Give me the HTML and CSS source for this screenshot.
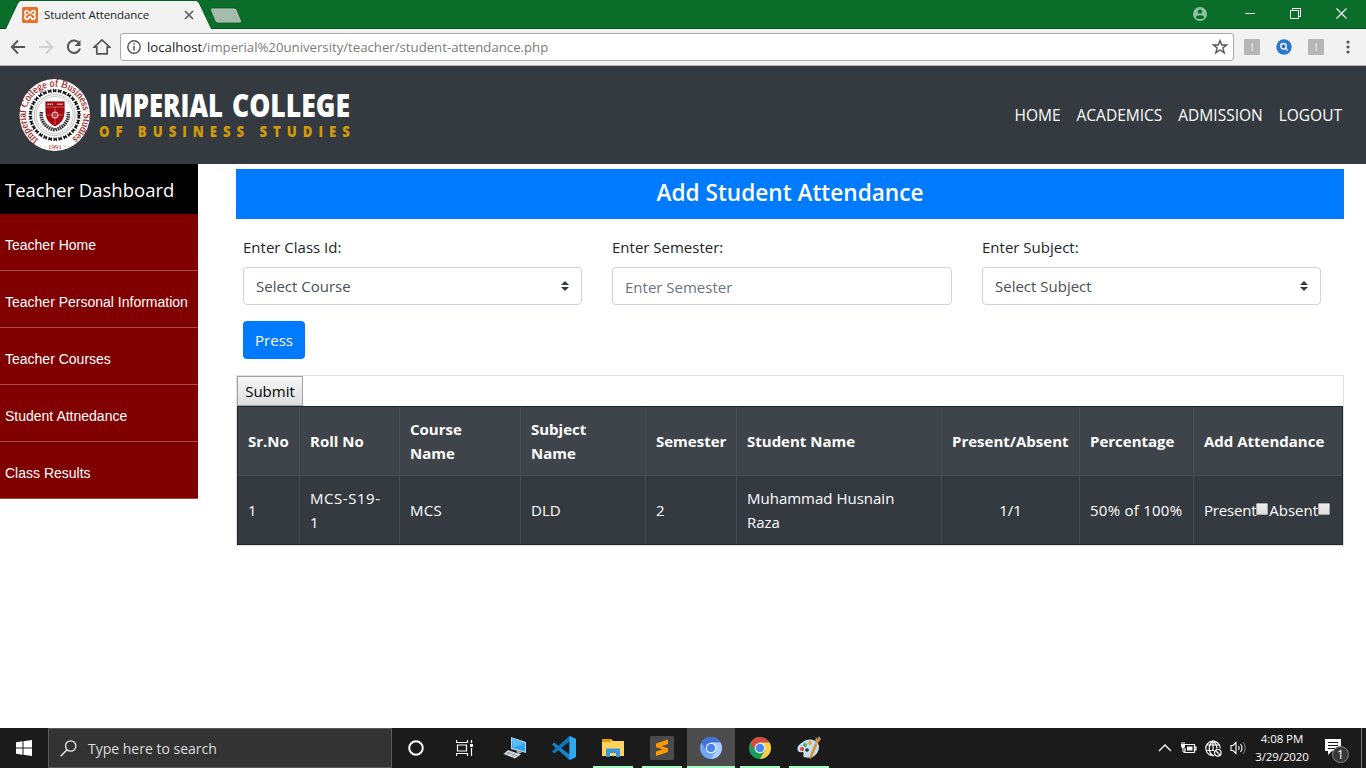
FILE: index.html
```html
<!DOCTYPE html>
<html lang="en">
<head>
<meta charset="utf-8">
<title>Student Attendance</title>
<link rel="stylesheet" href="styles.css">
</head>
<body>
<div class="screen">
  <div class="tabstrip">
    <svg class="tabshape" width="250" height="29" viewBox="0 0 250 29">
      <path d="M0 28.5H6L18 3Q19 1 21 1H196Q198 1 199 3L210.500 28.500H250" fill="none" stroke="#07501f"/>
      <path d="M6 29L18 3.500Q19 1 21 1H196Q198 1 199 3.500L211 29Z" fill="#f2f2f2"/>
      <path d="M212 8H234Q236 8 237 10L241.500 21Q242 23 240 23H218Q216 23 215 21L210.500 10Q210 8 212 8Z" fill="#a5bcad" stroke="#07501f" stroke-width=".7"/>
    </svg>
    <div class="tab">
      <svg width="16" height="16" viewBox="0 0 16 16"><rect width="16" height="16" rx="1.500" fill="#e87127"/><path d="M4.700 3.500C2.500 3.500 2.400 6.900 4.500 7.500C2.300 8.300 2.500 12.400 4.900 12.400C7 12.400 6.500 9.700 8 9.700S9 12.400 11.100 12.400C13.500 12.400 13.700 8.300 11.500 7.500C13.600 6.900 13.500 3.500 11.300 3.500C9.400 3.500 9.500 6 8 6S6.600 3.500 4.700 3.500Z" fill="none" stroke="#fff" stroke-width="1.700"/></svg>
      <span class="tabtitle">Student Attendance</span>
      <svg width="10" height="10" viewBox="0 0 10 10"><path d="M1 1L9 9M9 1L1 9" stroke="#5a5a5a" stroke-width="1.600"/></svg>
    </div>
    <div class="winbuttons">
      <svg width="14" height="14" viewBox="0 0 14 14"><circle cx="7" cy="7" r="7" fill="#8fc0a0"/><circle cx="7" cy="4.600" r="2.200" fill="#0a6e2a"/><path d="M2.600 10.400C3.500 7.400 10.500 7.400 11.400 10.400C9.500 12.500 4.500 12.500 2.600 10.400Z" fill="#0a6e2a"/></svg>
      <svg width="11" height="11" viewBox="0 0 11 11"><path d="M1 5.500H11" stroke="#fff"/></svg>
      <svg width="11" height="11" viewBox="0 0 11 11"><path d="M.5 2.500H8.500V10.500H.5ZM2.500 2.500V.5H10.500V8.500H8.500" fill="none" stroke="#fff"/></svg>
      <svg width="11" height="11" viewBox="0 0 11 11"><path d="M.5 .5L10.500 10.500M10.500 .5L.5 10.500" stroke="#fff" stroke-width="1.200"/></svg>
    </div>
  </div>
  <div class="toolbar">
    <div class="navicons">
      <svg width="16" height="16" viewBox="0 0 16 16"><path d="M8 1.500L1.800 8L8 14.500M2 8H15" fill="none" stroke="#555" stroke-width="1.900"/></svg>
      <svg width="16" height="16" viewBox="0 0 16 16"><path d="M8 1.500L14.200 8L8 14.500M14 8H1" fill="none" stroke="#d2d2d2" stroke-width="1.900"/></svg>
      <svg width="16" height="16" viewBox="0 0 16 16"><path d="M13 4A6.200 6.200 0 1 0 14 9.500" fill="none" stroke="#555" stroke-width="2"/><path d="M14.500 1V7H8.500Z" fill="#555"/></svg>
      <svg width="18" height="18" viewBox="0 0 18 18"><path d="M1.200 9.200L9 2L16.800 9.200H14.200V15.800H3.800V9.200Z" fill="none" stroke="#555" stroke-width="1.700"/></svg>
    </div>
    <div class="urlbar">
      <svg width="14" height="14" viewBox="0 0 14 14"><circle cx="7" cy="7" r="6.200" fill="none" stroke="#555" stroke-width="1.400"/><path d="M7 6V10.500M7 3.300V4.800" stroke="#555" stroke-width="1.600"/></svg>
      <span class="url"><b>localhost</b>/imperial%20university/teacher/student-attendance.php</span>
      <svg width="16" height="16" viewBox="0 0 16 16"><path d="M8 1.500L9.800 6H14.600L10.800 9L12.200 13.800L8 11L3.800 13.800L5.200 9L1.400 6H6.200Z" fill="none" stroke="#555" stroke-width="1.400"/></svg>
    </div>
    <div class="extensions">
      <span class="ext">I</span>
      <svg width="16" height="16" viewBox="0 0 16 16"><circle cx="8" cy="8" r="7.700" fill="#2977ce"/><circle cx="7.500" cy="7.300" r="2.800" fill="none" stroke="#fff" stroke-width="1.300"/><path d="M9.500 9.300L11.500 11.500" stroke="#fff" stroke-width="1.300"/></svg>
      <span class="ext">I</span>
      <svg width="4" height="14" viewBox="0 0 4 14"><path d="M2 2h0M2 7h0M2 12h0" stroke="#555" stroke-width="3.200" stroke-linecap="round"/></svg>
    </div>
  </div>

  <header class="site-header">
    <svg class="brand" width="340" height="76" viewBox="0 0 340 76">
      <ellipse cx="36.700" cy="38" rx="35.200" ry="36" fill="#fff"/>
      <path d="M20.500 62.500A29 29 0 1 1 53.500 62" id="outerName" fill="none"/>
      <text class="seal-name"><textPath href="#outerName" textLength="146" lengthAdjust="spacingAndGlyphs">Imperial College of Business Studies</textPath></text>
      <text class="seal-year" x="37" y="71.500" text-anchor="middle">· · 1991 · ·</text>
      <circle cx="36.700" cy="38" r="24.300" fill="none" stroke="#151515" stroke-width="3.500" stroke-dasharray="3.600 1.490"/>
      <circle cx="36.700" cy="38" r="26" fill="none" stroke="#fff" stroke-width="1.400" stroke-dasharray="1.400 4.045" stroke-dashoffset="-1.200"/>
      <circle cx="36.700" cy="38" r="22.600" fill="none" stroke="#fff" stroke-width="1.400" stroke-dasharray="1.300 3.433" stroke-dashoffset="-1"/>
      <circle cx="36.700" cy="38" r="20.500" fill="none" stroke="#999" stroke-width=".7"/>
      <circle cx="36.700" cy="38" r="18.500" fill="none" stroke="#aaa" stroke-width=".7"/>
      <path d="M23.500 35C22 44 28 51 36.700 53C45.500 51 51.500 44 50 35" fill="none" stroke="#333" stroke-width="3.600" stroke-dasharray="1.600 .7"/>
      <path d="M27 24H47V35Q47 45 37 50Q27 45 27 35Z" fill="#a5080f" stroke="#fff" stroke-width=".8"/>
      <path d="M28 30H46M37 30V48M29 38H45" stroke="#d98083" stroke-width=".7"/>
      <path d="M29.500 27.300H35M39 27.300H44.500" stroke="#f0c5c6" stroke-width="1.600" stroke-dasharray="1.500 .6"/>
      <circle cx="37" cy="38" r="2.900" fill="none" stroke="#edb7b9" stroke-width="1.200"/>
      <text class="brand-main" x="81" y="40" textLength="124" lengthAdjust="spacingAndGlyphs">IMPERIAL</text>
      <text class="brand-main" x="214" y="40" textLength="118" lengthAdjust="spacingAndGlyphs">COLLEGE</text>
      <text class="brand-sub" x="92" y="60" transform="scale(.88 1)" textLength="285">OF BUSINESS STUDIES</text>
    </svg>
    <nav class="site-nav"><a>HOME</a><a>ACADEMICS</a><a>ADMISSION</a><a>LOGOUT</a></nav>
  </header>

  <div class="body">
    <aside class="sidebar">
      <div class="side-title">Teacher Dashboard</div>
      <a>Teacher Home</a><a>Teacher Personal Information</a><a>Teacher Courses</a><a>Student Attnedance</a><a>Class Results</a>
    </aside>
    <main class="content">
      <h1>Add Student Attendance</h1>
      <div class="form">
        <div class="field"><label>Enter Class Id:</label>
          <div class="control">Select Course<svg width="8" height="10" viewBox="0 0 8 10"><path d="M0 4L4 0L8 4ZM0 6L4 10L8 6Z" fill="#343a40"/></svg></div></div>
        <div class="field"><label>Enter Semester:</label>
          <div class="control hint">Enter Semester</div></div>
        <div class="field"><label>Enter Subject:</label>
          <div class="control">Select Subject<svg width="8" height="10" viewBox="0 0 8 10"><path d="M0 4L4 0L8 4ZM0 6L4 10L8 6Z" fill="#343a40"/></svg></div></div>
      </div>
      <div class="press">Press</div>
      <div class="frame">
        <div class="submit">Submit</div>
        <div class="grid">
          <div class="row head">
            <div>Sr.No</div><div>Roll No</div><div>Course<br>Name</div><div>Subject<br>Name</div><div>Semester</div><div>Student Name</div><div>Present/Absent</div><div>Percentage</div><div>Add Attendance</div>
          </div>
          <div class="row">
            <div>1</div><div class="code">MCS-S19-<br>1</div><div class="caps">MCS</div><div>DLD</div><div>2</div><div>Muhammad Husnain<br>Raza</div><div class="mid">1/1</div><div class="caps">50% of 100%</div><div><span class="att">Present</span><i class="box"></i><span>Absent</span><i class="box"></i></div>
          </div>
        </div>
      </div>
    </main>
  </div>

  <footer class="taskbar">
    <div class="start"><svg width="16" height="16" viewBox="0 0 16 16"><path d="M0 2.300L6.500 1.300V7.500H0ZM7.500 1.200L16 0V7.500H7.500ZM0 8.500H6.500V14.700L0 13.800ZM7.500 8.500H16V16L7.500 14.800Z" fill="#fff"/></svg></div>
    <div class="search"><svg width="17" height="17" viewBox="0 0 17 17"><circle cx="10.700" cy="6" r="5.200" fill="none" stroke="#eee" stroke-width="1.300"/><path d="M7 9.800L.7 16.200" stroke="#eee" stroke-width="1.400"/></svg><span>Type here to search</span></div>
    <div class="app"><svg width="16" height="16" viewBox="0 0 16 16"><circle cx="8" cy="8" r="6.800" fill="none" stroke="#fff" stroke-width="2"/></svg></div>
    <div class="app view"><svg width="17" height="16" viewBox="0 0 17 16"><path d="M.5 0V2.500H11.500V0M.5 16V13.500H11.500V16M1.500 5H10.500V11H1.500ZM15.500 0V3M15.500 8V16" fill="none" stroke="#fff" stroke-width="1.200"/><rect x="14" y="4" width="3" height="3" fill="#fff"/></svg></div>
    <div class="app"><svg width="24" height="24" viewBox="0 0 24 24"><path d="M8 1L23 6V17L8 13Z" fill="#b9d7e8"/><path d="M9 2.300L22 7V15.500L9 11.800Z" fill="#2ea1f0"/><path d="M9 2.300L22 7L10 12Z" fill="#59bcf7"/><path d="M13 14L19 16.500L15 18Z" fill="#aeb7bd"/><path d="M5 14L18 18.500L12 22.500L.5 18Z" fill="#d3d7da"/><path d="M4 16.500L14 19.500M7 15.800L4 18.500M12 18L9 20.500" stroke="#818a91" stroke-width=".7"/></svg></div>
    <div class="app"><svg width="24" height="24" viewBox="0 0 24 24"><path d="M17.500 0L24 3V21L17.500 24L0 8.500L2 6.500L17.500 18.500Z" fill="#1687cc"/><path d="M17.500 0V5.500L2 17.500L0 15.500Z" fill="#1078bd"/><path d="M17.500 0L24 3V21L17.500 24Z" fill="#2daaf2"/></svg></div>
    <div class="app open"><svg width="22" height="18" viewBox="0 0 22 18"><path d="M0 0H9L11 2H22V17H0Z" fill="#ffd35d"/><path d="M0 0H9L10 1L8 3H0Z" fill="#e1a000"/><path d="M4 18V9.500H18V18H14V14H8V18Z" fill="#3696df"/></svg></div>
    <div class="app open"><svg width="24" height="24" viewBox="0 0 24 24"><rect width="24" height="24" rx="1" fill="#4b4b4b"/><path d="M6 7.500L18 3.500V8L11.500 10.200L18 12.200V16L6 20V15.500L12.500 13.300L6 11.200Z" fill="#ff9800"/></svg></div>
    <div class="app open active"><svg width="22" height="22" viewBox="0 0 22 22"><circle cx="11" cy="11" r="11" fill="#6fa7f5"/><path d="M1.500 5.500A11 11 0 0 1 20.500 5.500H11L6.200 13.700Z" fill="#4173d4"/><path d="M20.500 5.500A11 11 0 0 1 11 22L15.800 13.700L11 5.500Z" fill="#a9cbff"/><circle cx="11" cy="11" r="5.300" fill="#fff"/><circle cx="11" cy="11" r="4.300" fill="#4b87ea"/></svg></div>
    <div class="app open"><svg width="22" height="22" viewBox="0 0 22 22"><circle cx="11" cy="11" r="11" fill="#17a05d"/><path d="M1.500 5.500A11 11 0 0 1 20.500 5.500H11L6.200 13.700Z" fill="#dc4b3e"/><path d="M20.500 5.500A11 11 0 0 1 11 22L15.800 13.700L11 5.500Z" fill="#ffcd45"/><circle cx="11" cy="11" r="5.300" fill="#fff"/><circle cx="11" cy="11" r="4.300" fill="#4b87ea"/></svg></div>
    <div class="app open"><svg width="24" height="24" viewBox="0 0 24 24"><path d="M6 6C12 1 22 4 22 11C22 18 15 24 7 21C5 20 8 17 5.500 16C2 17 0 15 .5 12C1 9 3 8 6 6Z" fill="#bfdff2"/><circle cx="5" cy="13" r="2" fill="#e8423b"/><circle cx="8" cy="9" r="2" fill="#52b848"/><circle cx="13" cy="7" r="2" fill="#f5a22b"/><circle cx="10" cy="14" r="1.800" fill="#303030"/><path d="M12 22L18 7L20.500 8.500L14 23Z" fill="#e48d2b"/><path d="M18 6L19 1L20.500 3L22 0L24 3L20.500 8Z" fill="#c08d5c"/></svg></div>
    <div class="tray">
      <svg width="14" height="16" viewBox="0 0 14 16"><path d="M1 11L7 5L13 11" fill="none" stroke="#fff" stroke-width="1.400"/></svg>
      <svg width="17" height="16" viewBox="0 0 17 16"><path d="M5 4.500H14.500V12.500H5V8M14.500 7H16V10H14.500" fill="none" stroke="#fff" stroke-width="1.200"/><path d="M7 6.500H12.500V10.500H7ZM1 4H5V7L3 8.500L1 7Z" fill="#fff"/><path d="M2 2V4M4 2V4M3 8V12H5" fill="none" stroke="#fff"/></svg>
      <svg width="17" height="17" viewBox="0 0 17 17"><g fill="none" stroke="#fff" stroke-width="1.200"><path d="M9 15.500A7.200 7.200 0 1 1 15.200 8.500M8 1C3 5 3 12 8 15.700M8 1C11 3.500 12 6 11.800 8.500M2 5H14M1 10.500H9M8 1V10"/><circle cx="12.800" cy="12.800" r="3.300"/><path d="M10.500 10.500L15 15"/></g></svg>
      <svg width="17" height="16" viewBox="0 0 17 16"><g fill="none" stroke="#fff" stroke-width="1.100"><path d="M1 5.500H3L6 2.500V13.500L3 10.500H1ZM8.500 6Q10 8 8.500 10M10.500 4Q13.500 8 10.500 12"/><path d="M13 2Q17.500 8 13 14" stroke="#777"/></g></svg>
    </div>
    <div class="clock"><span>4:08 PM</span><span>3/29/2020</span></div>
    <svg class="notice" width="26" height="26" viewBox="0 0 26 26"><path d="M1 1H17V13H8L4 17V13H1Z" fill="#fff"/><path d="M4 4.500H14M4 7.500H14M4 10.500H11" stroke="#1c1c1c"/><circle cx="16.500" cy="16.500" r="8" fill="#383838" stroke="#8a8a8a"/><text x="16.500" y="21" text-anchor="middle">1</text></svg>
    <div class="peek"></div>
  </footer>
</div>
</body>
</html>
```
FILE: styles.css
```css
* { box-sizing: border-box; }
body { margin: 0; font-family: "Open Sans", sans-serif; font-size: 15px; color: #212529; background: #fff; overflow: hidden; }
svg { display: block; flex: none; }
.screen { width: 1366px; height: 768px; display: flex; flex-direction: column; }
.screen > * { flex: none; }

.tabstrip { position: relative; height: 29px; background: #0a6e2a; border-bottom: 1px solid #07501f; display: flex; justify-content: space-between; }
.tabshape { position: absolute; left: 0; top: 0; }
.tab { position: relative; display: flex; align-items: center; padding: 0 0 0 22px; width: 200px; height: 29px; font-size: 11.5px; color: #222; }
.tabtitle { margin-left: 6px; width: 140px; letter-spacing: -.08px; white-space: nowrap; }
.winbuttons { display: flex; align-items: center; height: 27px; gap: 35px; padding-right: 19px; }
.winbuttons svg:first-child { margin-right: 2px; }

.toolbar { height: 37px; background: #f2f2f2; border-bottom: 1px solid #b6b6b6; display: flex; align-items: center; padding: 0 16px 0 10px; }
.navicons { display: flex; align-items: center; gap: 12px; width: 110px; }
.navicons svg:last-child { margin-left: -1px; }
.urlbar { width: 1114px; height: 28px; border: 1px solid #a9a9a9; border-radius: 3px; background: #fff; display: flex; align-items: center; padding: 0 5px 0 6px; font-size: 13.200px; color: #7b7b7b; }
.url { flex: 1; margin-left: 6px; }
.url b { font-weight: 400; color: #222; }
.extensions { display: flex; align-items: center; margin-left: 10px; gap: 16px; }
.extensions svg:last-child { margin-left: 6px; }
.ext { width: 16px; height: 16px; background: #b5b5b5; border-radius: 1px; color: #eee; font-size: 11px; line-height: 16px; text-align: center; }

.site-header { height: 98px; background: #343a40; display: flex; align-items: center; justify-content: space-between; padding: 0 24px 0 18px; }
.brand { overflow: visible; }
.brand-main { font: 800 32px "Open Sans", sans-serif; fill: #fff; }
.brand-sub { font: 800 15px "Open Sans", sans-serif; fill: #d19a09; }
.seal-name { font: 10.500px "Liberation Serif", serif; fill: #9b1720; stroke: #9b1720; stroke-width: .2px; }
.seal-year { font: 7px "Liberation Serif", serif; fill: #9b1720; }
.site-nav { display: flex; gap: 16px; color: #fff; font-size: 15.500px; }

.body { height: 564px; width: 1366px; display: flex; align-items: flex-start; }
.sidebar { width: 198px; background: #800000; color: #fff; display: flex; flex-direction: column; }
.side-title { height: 50px; background: #000; padding: 0 5px; line-height: 51px; font-size: 18.500px; }
.sidebar a { height: 57px; line-height: 62px; padding-left: 5px; font-family: "Liberation Sans", sans-serif; font-size: 14px; border-bottom: 1px solid #a64d4d; white-space: nowrap; }
.content { width: 1108px; margin: 5px 0 0 38px; }
h1 { margin: 0; height: 50px; background: #007bff; color: #fff; font-size: 22.600px; font-weight: 600; line-height: 47px; text-align: center; }
.form { display: grid; grid-template-columns: 339px 340px 339px; gap: 30px; padding: 16px 0 0 7px; }
label { display: block; height: 32px; line-height: 25px; }
.control { height: 38px; border: 1px solid #ced4da; border-radius: 4px; padding: 0 12px; display: flex; align-items: center; justify-content: space-between; color: #495057; }
.hint { color: #6c757d; padding-top: 1px; }
.press { width: 62px; height: 38px; margin: 16px 0 16px 7px; background: #007bff; color: #fff; border-radius: 4px; text-align: center; line-height: 38px; }
.frame { height: 171px; border: 1px solid #dee2e6; }
.submit { width: 66px; height: 30px; background: linear-gradient(#f6f6f6, #dedede); border: 1px solid #a2a2a2; color: #000; line-height: 28px; text-align: center; }
.grid { height: 139px; border: 1px solid #212529; background: #343a40; color: #fff; line-height: 24px; }
.row { display: grid; grid-template-columns: 62px 100px 121px 125px 91px 205px 138px 114px 148px; height: 68px; }
.row > div { display: flex; align-items: center; padding-left: 10px; border-right: 1px solid #454d55; white-space: nowrap; }
.row > div:last-child { border-right: 0; }
.head { height: 69px; background: #3e444a; border-bottom: 1px solid #454d55; font-weight: 700; }
.row > .mid { justify-content: center; padding: 0; }
.code { letter-spacing: .55px; }
.caps { letter-spacing: .25px; }
.att { letter-spacing: -.2px; }
.box { width: 12px; height: 12px; margin: -3px 1px 0 0; border: 1px solid #a8a8a8; border-radius: 1px; background: linear-gradient(#eee, #ddd); }

.taskbar { height: 40px; background: #1b1b1b; display: flex; align-items: center; color: #fff; }
.start { width: 48px; display: flex; justify-content: center; }
.search { width: 344px; height: 40px; background: #333; border: 1px solid #5a5a5a; display: flex; align-items: center; padding-left: 11px; gap: 11px; color: #ddd; font-size: 14px; }
.app { width: 48px; height: 40px; margin-right: 1px; display: flex; align-items: center; justify-content: center; }
.search + .app { margin-right: 0; }
.view { margin-right: 3px; }
.open { background: linear-gradient(#a9fcc6, #a9fcc6) 50% 100% / 40px 2px no-repeat; }
.active { background-color: #4c4c4c; background-size: 48px 2px; }
.tray { display: flex; align-items: center; gap: 8px; margin-left: 324px; }
.clock { width: 70px; display: flex; flex-direction: column; align-items: center; line-height: 18px; font-size: 11.500px; letter-spacing: -.1px; white-space: nowrap; }
.notice { margin: 6px 0 0 7px; }
.notice text { font: 12px "Open Sans", sans-serif; fill: #fff; }
.peek { width: 1px; height: 40px; background: #777; margin-left: 11px; }
```
